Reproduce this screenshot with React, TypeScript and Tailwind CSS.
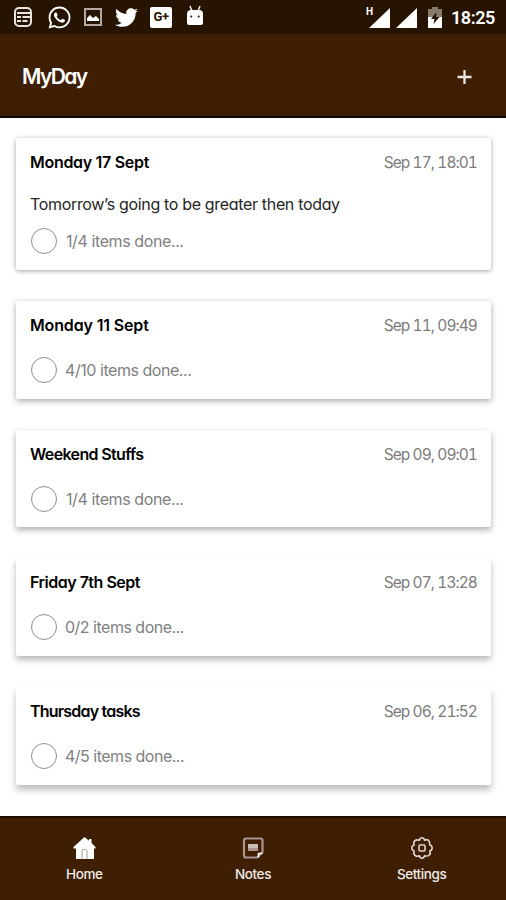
import React from "react";
import { FaWhatsapp, FaTwitter } from "react-icons/fa";

type Entry = {
  title: string;
  titleTracking: string;
  date: string;
  note?: string;
  progress: string;
  progressTracking: string;
  shadow: string;
};

const entries: Entry[] = [
  { title: "Monday 17 Sept", titleTracking: "tracking-[-0.3px]", date: "Sep 17, 18:01", note: "Tomorrow’s going to be greater then today", progress: "1/4 items done...", progressTracking: "tracking-[-0.4px]", shadow: "shadow-[0_1px_5px_rgba(0,0,0,0.36)]" },
  { title: "Monday 11 Sept", titleTracking: "tracking-[-0.15px]", date: "Sep 11, 09:49", progress: "4/10 items done...", progressTracking: "tracking-[-0.45px] -ml-px", shadow: "shadow-[0_2px_6px_rgba(0,0,0,0.34)]" },
  { title: "Weekend Stuffs", titleTracking: "tracking-[-0.65px]", date: "Sep 09, 09:01", progress: "1/4 items done...", progressTracking: "tracking-[-0.4px]", shadow: "shadow-[0_3px_6px_rgba(0,0,0,0.32)]" },
  { title: "Friday 7th Sept", titleTracking: "tracking-[-0.5px]", date: "Sep 07, 13:28", progress: "0/2 items done...", progressTracking: "tracking-[-0.5px] -ml-px", shadow: "shadow-[0_4px_6px_rgba(0,0,0,0.28)]" },
  { title: "Thursday tasks", titleTracking: "tracking-[-0.8px]", date: "Sep 06, 21:52", progress: "4/5 items done...", progressTracking: "tracking-[-0.5px] -ml-px", shadow: "shadow-[0_5px_7px_rgba(0,0,0,0.26)]" },
];

function StatusBar() {
  return (
    <div className="flex h-[34px] shrink-0 items-center bg-[#271400] pl-[13px] pr-[11px] text-white">
      <svg width="20" height="20" viewBox="0 0 20 20" fill="none" stroke="#e8e4e0" strokeWidth="2">
        <rect x="2" y="1" width="16" height="18" rx="4" />
        <path d="M4 6h13M4 10h4M9.500 10H17M4 14h4M9.500 14h5" strokeWidth="2" />
      </svg>
      <FaWhatsapp className="ml-[14px] size-[25px]" />
      <svg className="ml-[12px]" width="18" height="20" viewBox="0 0 18 20">
        <rect x="1" y="2" width="16" height="16" fill="none" stroke="#b5aaa2" strokeWidth="2" />
        <path d="M3 14v-3l3-3 3 3 3-2 3 3v2z" fill="#fff" />
      </svg>
      <FaTwitter className="ml-[13px] size-[23px]" />
      <div className="ml-[12px] flex h-[21px] w-[22px] items-center justify-center rounded-[2px] bg-white font-['Roboto',sans-serif] text-[13px] font-bold tracking-[-0.5px] text-[#271400]">G+</div>
      <svg className="-mt-[2px] ml-[14px]" width="18" height="22" viewBox="0 0 18 22">
        <path d="M4 1l2 5M14 1l-2 5" stroke="#fff" strokeWidth="1.4" />
        <path d="M1 9a4 4 0 0 1 4-4h8a4 4 0 0 1 4 4v9a2 2 0 0 1-2 2H3a2 2 0 0 1-2-2z" fill="#fff" />
        <circle cx="5.3" cy="11.5" r="1" fill="#271400" />
        <circle cx="12.7" cy="11.5" r="1" fill="#271400" />
      </svg>
      <div className="ml-auto flex items-center pt-px">
        <span className="mb-[11px] font-['Roboto',sans-serif] text-[10px] font-bold leading-[10px]">H</span>
        <svg className="-ml-[4px]" width="21" height="20" viewBox="0 0 21 20"><path d="M21 0v20H0z" fill="#fff" /></svg>
        <svg className="ml-[6px]" width="21" height="20" viewBox="0 0 21 20"><path d="M21 0v20H0z" fill="#fff" /></svg>
        <svg className="ml-[11px]" width="14" height="21" viewBox="0 0 14 21">
          <path d="M4 0h6v2h4v8H0V2h4z" fill="#85796c" />
          <path d="M0 10h14v11H0z" fill="#fff" />
          <path d="M8.500 5L3 12h3.500L5.500 17l6-7H8z" fill="#271400" />
        </svg>
        <span className="ml-[9px] font-['Roboto',sans-serif] text-[18px] font-semibold tracking-[-0.4px]">18:25</span>
      </div>
    </div>
  );
}

function Card({ entry }: { entry: Entry }) {
  return (
    <article className={`shrink-0 rounded-[2px] bg-white px-[14px] pt-[14px] ${entry.note ? "h-[132px]" : "h-[97.7px]"} ${entry.shadow}`}>
      <div className="flex h-5 items-baseline justify-between text-[16px] leading-5">
        <h2 className={`font-semibold text-black ${entry.titleTracking}`}>{entry.title}</h2>
        <time className="text-[15.5px] tracking-[-0.93px] text-[#7c7c7c] [font-feature-settings:'cv11'_1,'tnum'_1]">{entry.date}</time>
      </div>
      {entry.note && <p className="mt-[22px] h-5 whitespace-nowrap text-[16px] leading-5 tracking-[-0.33px] text-[#252525]">{entry.note}</p>}
      <div className={`flex items-center gap-[9px] pl-[1px] ${entry.note ? "mt-[14px]" : "mt-[22px]"}`}>
        <span className="size-[26px] rounded-full border border-[#8f8f8f]" />
        <span className={`text-[16px] text-[#808080] ${entry.progressTracking}`}>{entry.progress}</span>
      </div>
    </article>
  );
}

export default function App() {
  return (
    <div className="flex h-[900px] w-[506px] flex-col overflow-hidden bg-white font-['Inter','Noto_Sans',sans-serif] [font-feature-settings:'cv11'_1]">
      <StatusBar />
      <header className="flex h-[84px] shrink-0 items-center justify-between border-b-2 border-[#110700] bg-[#3e1f04] pl-[22px] pr-[34px] pt-[3px] text-white">
        <h1 className="text-[21px] font-semibold tracking-[-1.6px]">MyDay</h1>
        <svg width="15" height="16" viewBox="0 0 15 16" stroke="#eee8e4" strokeWidth="2.3"><path d="M7.5 1v14M.5 8h14" /></svg>
      </header>
      <main className="flex min-h-0 flex-1 flex-col gap-[31px] pl-4 pr-[15px] pt-5">
        {entries.map((entry) => <Card key={entry.title} entry={entry} />)}
      </main>
      <nav className="grid h-[84px] shrink-0 grid-cols-3 border-t-2 border-[#1c0c00] bg-[#3e1f04] pt-[18px] text-[13.5px] font-medium tracking-[-0.4px] text-[#f0ebe7]">
        <div className="flex flex-col items-center gap-[6px]">
          <svg width="24" height="24" viewBox="0 0 24 24">
            <path d="M12.500 1l4.500 3.800V3h2.500v4L23.500 11v1.500H22V23H4V12.500H1.500V11z" fill="#fff" />
            <path d="M10 23v-8a1.500 1.500 0 0 1 1.500-1.500h2A1.500 1.500 0 0 1 15 15v8" fill="none" stroke="#a99d92" />
          </svg>
          <span className="leading-4">Home</span>
        </div>
        <div className="flex flex-col items-center gap-[6px]">
          <svg width="24" height="24" viewBox="0 0 24 24">
            <path d="M16 21.500H5a2 2 0 0 1-2-2V4.500a2 2 0 0 1 2-2h14.500a2 2 0 0 1 2 2V16z" fill="none" stroke="#a99492" strokeWidth="2.200" />
            <path d="M17.500 21.500V17.500h4" fill="none" stroke="#fff" strokeWidth="1.600" />
            <path d="M7 8h10v4H7zM7 12h10v3H7z" fill="#a99492" />
            <path d="M7 8h10v4H7z" fill="#c9bcb9" />
          </svg>
          <span className="leading-4">Notes</span>
        </div>
        <div className="flex flex-col items-center gap-[6px]">
          <svg width="24" height="24" viewBox="0 0 24 24" fill="none" stroke="#ded3cf" strokeWidth="1.6">
            <path d="M9.400 4.200Q10 1.800 12 1.800T14.600 4.200Q17 3 18.600 4.600T19.800 9Q22.200 9.800 22.200 12T19.800 15Q21 17.400 19.300 19T14.600 19.800Q14 22.200 12 22.200T9.400 19.800Q7 21 5 19.300T4.200 15Q1.800 14.200 1.800 12T4.200 9Q3 6.600 4.700 4.900T9.400 4.200Z" strokeLinejoin="round" />
            <rect x="9" y="9" width="6" height="6" rx="1" />
          </svg>
          <span className="leading-4">Settings</span>
        </div>
      </nav>
    </div>
  );
}
